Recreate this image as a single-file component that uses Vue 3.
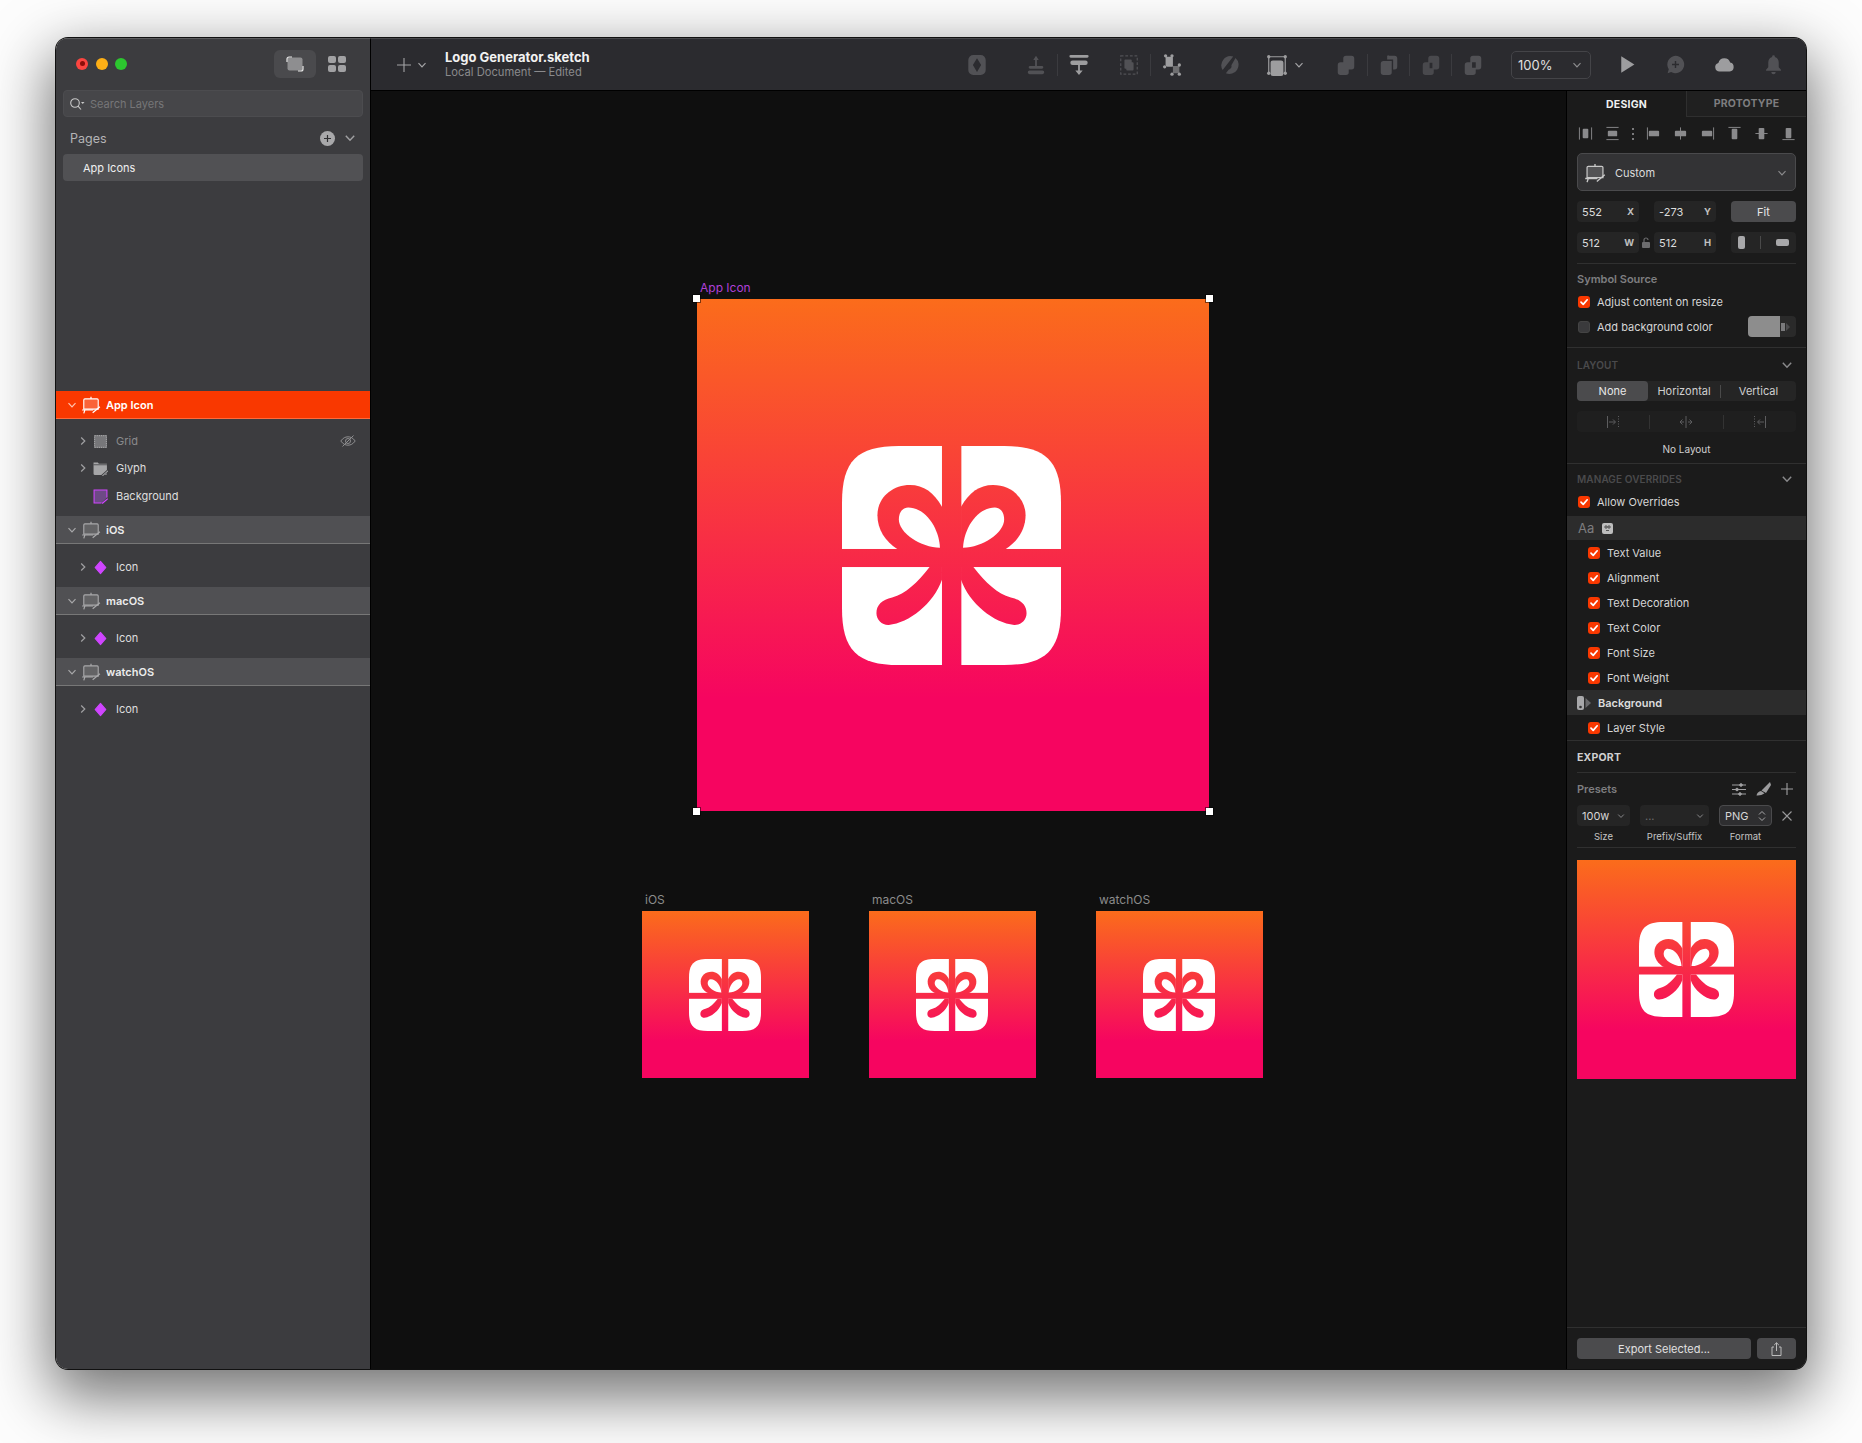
<template>
  <div class="page">
    <!-- shared icon sprites -->
    <svg class="sprites" width="0" height="0" aria-hidden="true">
      <defs>
        <mask id="gift-mask" maskUnits="userSpaceOnUse" x="0" y="0" width="655" height="655">
          <path fill="#fff" d="M170 0H485C610 0 655 45 655 170V485C655 610 610 655 485 655H170C45 655 0 610 0 485V170C0 45 45 0 170 0Z" />
          <g fill="#000">
            <rect x="299" y="0" width="58" height="655" />
            <rect x="0" y="308" width="655" height="54" />
            <path d="M299 182C275 140 245 117 203 117C150 117 106 155 106 207C106 250 130 285 165 308L299 330Z" />
            <path d="M356 182C380 140 410 117 452 117C505 117 549 155 549 207C549 250 525 285 490 308L356 330Z" />
            <path d="M262 362C225 410 190 442 150 453C120 460 103 475 103 500C103 520 120 536 140 535C200 530 275 470 299 400V362Z" />
            <path d="M393 362C430 410 465 442 505 453C535 460 552 475 552 500C552 520 535 536 515 535C455 530 380 470 356 400V362Z" />
          </g>
          <g fill="#fff">
            <path d="M293 304C290 245 250 184 198 184C180 184 170 200 170 220C170 260 235 304 293 304Z" />
            <path d="M362 304C365 245 405 184 457 184C475 184 485 200 485 220C485 260 420 304 362 304Z" />
          </g>
        </mask>
        <symbol id="gift" viewBox="0 0 655 655">
          <rect width="655" height="655" fill="#fff" mask="url(#gift-mask)" />
        </symbol>
        <symbol id="chev" viewBox="0 0 10 10">
          <path d="M1.500 3.200 5 6.800l3.500-3.600" fill="none" stroke="currentColor" stroke-width="1.200" />
        </symbol>
        <symbol id="chev-r" viewBox="0 0 10 10">
          <path d="M3.200 1.500 6.800 5 3.200 8.500" fill="none" stroke="currentColor" stroke-width="1.200" />
        </symbol>
        <symbol id="check" viewBox="0 0 12 12">
          <path d="M3 6.200 5.200 8.400 9.200 3.800" fill="none" stroke="#fff" stroke-width="1.700" stroke-linecap="round" stroke-linejoin="round" />
        </symbol>
        <symbol id="artboard" viewBox="0 0 18 16">
          <path d="M3.500 2.500h11a1 1 0 0 1 1 1v8.200h-13V3.500a1 1 0 0 1 1-1Z" fill="currentColor" fill-opacity=".22" stroke="currentColor" />
          <path d="M9 .6v2M1 12.500h10M3.500 12.500l-1 3M10.500 15 17 9.500" fill="none" stroke="currentColor" stroke-width="1.100" />
        </symbol>
        <symbol id="i-symbol" viewBox="0 0 24 24">
          <path fill-rule="evenodd" d="M8 1h8a5.500 5.500 0 0 1 5.500 5.500v11A5.500 5.500 0 0 1 16 23H8a5.500 5.500 0 0 1-5.500-5.500v-11A5.500 5.500 0 0 1 8 1Zm4 3.500-4.500 7.500 4.500 7.500 4.500-7.500Z" />
        </symbol>
        <symbol id="i-forward" viewBox="0 0 24 24">
          <path d="M12 2l3 4.500h-2V13h5.500a1.500 1.500 0 0 1 0 3h-13a1.500 1.500 0 0 1 0-3H11V6.500H9Zm-7 16h14a2 2 0 0 1 0 4H5a2 2 0 0 1 0-4Z" />
        </symbol>
        <symbol id="i-backward" viewBox="0 0 24 24">
          <path d="M3 1h18a1.500 1.500 0 0 1 0 3H3a1.500 1.500 0 0 1 0-3Zm2 6h14a2.500 2.500 0 0 1 0 5h-6v6h3l-4 5-4-5h3v-6H5a2.500 2.500 0 0 1 0-5Z" />
        </symbol>
        <symbol id="i-mask" viewBox="0 0 24 24">
          <path d="M3 2h18v20H3Z" fill="none" stroke="currentColor" stroke-width="1.300" stroke-dasharray="3 2" />
          <path d="M8 6h6a1 1 0 0 1 1 1v2h1a1 1 0 0 1 1 1v7a1 1 0 0 1-1 1h-6a1 1 0 0 1-1-1v-1H8a1 1 0 0 1-1-1V7a1 1 0 0 1 1-1Z" />
        </symbol>
        <symbol id="i-scissors" viewBox="0 0 24 24">
          <path d="M5 3h7a1 1 0 0 1 1 1v9a1 1 0 0 1-1 1H7a2 2 0 0 1-2-2Z" />
          <path d="M13 13h7v8h-7Z" fill-opacity=".6" />
          <circle cx="5" cy="2" r="1.800" /><circle cx="12" cy="2" r="1.800" /><circle cx="4" cy="14" r="1.800" /><circle cx="20" cy="12" r="1.800" /><circle cx="20" cy="22" r="1.800" /><circle cx="12" cy="22" r="1.800" />
        </symbol>
        <symbol id="i-rotate" viewBox="0 0 24 24">
          <path d="M15.500 2.800 4 17.500A10 10 0 0 1 15.500 2.800Zm2.500 1.500A10 10 0 0 1 7.500 21l3-3.800a4 4 0 0 0 3-5Z" />
        </symbol>
        <symbol id="i-resize" viewBox="0 0 24 24">
          <path d="M3 3h18M3 3v18M21 3v18" fill="none" stroke="currentColor" stroke-width="1.300" />
          <circle cx="3" cy="3" r="1.800" /><circle cx="21" cy="3" r="1.800" /><circle cx="3" cy="21" r="1.800" /><circle cx="21" cy="21" r="1.800" />
          <rect x="5" y="7" width="14" height="17" rx="2.500" />
        </symbol>
        <symbol id="i-union" viewBox="0 0 24 24">
          <path d="M12 2h6a3 3 0 0 1 3 3v9a3 3 0 0 1-3 3h-3v3a3 3 0 0 1-3 3H6a3 3 0 0 1-3-3v-8a3 3 0 0 1 3-3h3V5a3 3 0 0 1 3-3Z" />
        </symbol>
        <symbol id="i-subtract" viewBox="0 0 24 24">
          <path d="M8 7.500h7V20a3 3 0 0 1-3 3H6a3 3 0 0 1-3-3v-9.500a3 3 0 0 1 3-3Z" />
          <path d="M12 2h6a3 3 0 0 1 3 3v9a3 3 0 0 1-3 3h-1.500V6H10V3a1 1 0 0 1 2-1Z" />
        </symbol>
        <symbol id="i-intersect" viewBox="0 0 24 24">
          <path fill-rule="evenodd" d="M12 2h6a3 3 0 0 1 3 3v9a3 3 0 0 1-3 3h-3v3a3 3 0 0 1-3 3H6a3 3 0 0 1-3-3v-8a3 3 0 0 1 3-3h3V5a3 3 0 0 1 3-3Zm-1.500 7.500v6h3v-6Z" fill-opacity=".8" />
        </symbol>
        <symbol id="i-difference" viewBox="0 0 24 24">
          <path fill-rule="evenodd" d="M12 2h6a3 3 0 0 1 3 3v9a3 3 0 0 1-3 3h-3v3a3 3 0 0 1-3 3H6a3 3 0 0 1-3-3v-8a3 3 0 0 1 3-3h3V5a3 3 0 0 1 3-3Zm-1 7h4v6h-4Z" />
        </symbol>
        <symbol id="i-play" viewBox="0 0 24 24"><path d="M6 2.500 21 12 6 21.500Z" /></symbol>
        <symbol id="i-comment" viewBox="0 0 24 24">
          <path fill-rule="evenodd" d="M12 2a10 10 0 1 1-5 18.700L3 22l1.300-4.500A10 10 0 0 1 12 2Zm-.8 6v3.200H8v1.600h3.200V16h1.600v-3.200H16v-1.600h-3.200V8Z" />
        </symbol>
        <symbol id="i-cloud" viewBox="0 0 24 24"><path d="M6.500 20A5 5 0 0 1 5 10.200 7 7 0 0 1 18.500 9.800 5.200 5.200 0 0 1 18 20Z" /></symbol>
        <symbol id="i-bell" viewBox="0 0 24 24"><path d="M12 1.500a1.500 1.500 0 0 1 1.500 1.800C16.500 4 18 6.800 18 10v5l2.500 3v1h-17v-1L6 15v-5c0-3.200 1.500-6 4.500-6.700A1.500 1.500 0 0 1 12 1.500ZM9.500 20.500h5a2.500 2.500 0 0 1-5 0Z" /></symbol>
        <!-- alignment row -->
        <symbol id="a-1" viewBox="0 0 16 16"><path d="M1.500 1.500v13M14.500 1.500v13" fill="none" stroke="currentColor" /><rect x="5" y="3" width="6" height="10" rx="1" /></symbol>
        <symbol id="a-2" viewBox="0 0 16 16"><path d="M1.500 1.500h13M1.500 14.500h13" fill="none" stroke="currentColor" /><rect x="3" y="5" width="10" height="6" rx="1" /></symbol>
        <symbol id="a-3" viewBox="0 0 16 16"><path d="M1.500 1.500v13" fill="none" stroke="currentColor" /><rect x="3" y="5" width="11" height="6" rx="1" /></symbol>
        <symbol id="a-4" viewBox="0 0 16 16"><path d="M8 1.500v13" fill="none" stroke="currentColor" /><rect x="2" y="5" width="12" height="6" rx="1" /></symbol>
        <symbol id="a-5" viewBox="0 0 16 16"><path d="M14.500 1.500v13" fill="none" stroke="currentColor" /><rect x="2" y="5" width="11" height="6" rx="1" /></symbol>
        <symbol id="a-6" viewBox="0 0 16 16"><path d="M1.500 1.500h13" fill="none" stroke="currentColor" /><rect x="5" y="3" width="6" height="11" rx="1" /></symbol>
        <symbol id="a-7" viewBox="0 0 16 16"><path d="M1.500 8h13" fill="none" stroke="currentColor" /><rect x="5" y="2" width="6" height="12" rx="1" /></symbol>
        <symbol id="a-8" viewBox="0 0 16 16"><path d="M1.500 14.500h13" fill="none" stroke="currentColor" /><rect x="5" y="2" width="6" height="11" rx="1" /></symbol>
      </defs>
    </svg>

    <div class="window">
      <aside class="sidebar">
        <div class="side-top">
          <span class="light red"><i></i></span>
          <span class="light amber"></span>
          <span class="light green"></span>
          <div class="view-toggle">
            <span class="view active">
              <svg width="18" height="16" viewBox="0 0 18 16"><rect x="1.500" y="1.500" width="15" height="13" rx="2" fill="#8e8e90" /><path d="M1 6V3a2 2 0 0 1 2-2h3M17 10v3a2 2 0 0 1-2 2h-3" fill="none" stroke="#e8e8e8" stroke-width="1.200" /></svg>
            </span>
            <span class="view">
              <svg width="18" height="16" viewBox="0 0 18 16" fill="#a2a2a4"><rect width="8" height="7" rx="2" /><rect x="10" width="8" height="7" rx="2" /><rect y="9" width="8" height="7" rx="2" /><rect x="10" y="9" width="8" height="7" rx="2" /></svg>
            </span>
          </div>
        </div>

        <div class="search">
          <svg width="16" height="14" viewBox="0 0 16 14"><circle cx="6" cy="6" r="4.300" fill="none" stroke="#c8c8c8" stroke-width="1.100" /><path d="M9 9.200 12 12.500" stroke="#c8c8c8" stroke-width="1.100" /><path d="M12 5h3.500l-1.750 2Z" fill="#c8c8c8" /></svg>
          <span>Search Layers</span>
        </div>

        <div class="pages-head">
          <span>Pages</span>
          <span class="add-page">
            <svg width="9" height="9" viewBox="0 0 9 9"><path d="M4.500 1v7M1 4.500h7" stroke="#2f2f31" stroke-width="1.200" /></svg>
          </span>
          <svg class="icon-12 pages-chev" viewBox="0 0 10 10"><use href="#chev" /></svg>
        </div>
        <div class="page-row">App Icons</div>

        <div class="layers">
          <template v-for="group in layers" :key="group.name">
            <div class="group" :class="{ selected: group.selected }">
              <svg class="icon-10 g-chev" viewBox="0 0 10 10"><use href="#chev" /></svg>
              <svg class="g-icon" width="20" height="18" viewBox="0 0 18 16"><use href="#artboard" /></svg>
              <span>{{ group.name }}</span>
            </div>
            <div class="children" :class="group.pad">
              <div v-for="child in group.children" :key="child.name" class="layer" :class="{ dim: child.hidden }">
                <svg v-if="child.arrow" class="icon-10 l-chev" viewBox="0 0 10 10"><use href="#chev-r" /></svg>
                <span v-else class="l-chev"></span>
                <svg class="l-icon" width="15" height="15" viewBox="0 0 14 14">
                  <path v-if="child.kind === 'symbol'" d="M7 1.200 12 7l-5 5.800L2 7Z" fill="#cf45ff" stroke="#cf45ff" stroke-linejoin="round" />
                  <template v-else-if="child.kind === 'grid'">
                    <rect x="1" y="1" width="12" height="12" fill="#77777a" />
                    <rect x="1.500" y="1.500" width="11" height="11" fill="none" stroke="#a2a2a4" stroke-dasharray="1 1" />
                  </template>
                  <template v-else-if="child.kind === 'folder'">
                    <path d="M.5 1.500h4l1 1h7.500v9.500a1 1 0 0 1-1 1H1.500a1 1 0 0 1-1-1Z" fill="#a6a6a8" />
                    <path d="M.5 3.500h13" stroke="#3c3c3f" stroke-width=".7" />
                    <path d="M8.500 13.800 14 9" stroke="#3c3c3f" stroke-width="2.200" />
                    <path d="M8.800 13.800 14 9.200" stroke="#a6a6a8" />
                  </template>
                  <template v-else>
                    <path d="M1 1h12v7l-5 5H1Z" fill="#6d4a86" />
                    <path d="M8 13H1V1h12v7" fill="none" stroke="#cf45ff" />
                    <path d="M8.500 13.500 13.800 9" stroke="#cf45ff" stroke-width="1.200" />
                  </template>
                </svg>
                <span>{{ child.name }}</span>
                <svg v-if="child.hidden" class="eye" width="16" height="12" viewBox="0 0 16 12" fill="none" stroke="#8d8d8f"><path d="M.8 6C3 3 5.300 1.800 8 1.800S13 3 15.200 6C13 9 10.700 10.200 8 10.200S3 9 .8 6Z" /><circle cx="8" cy="6" r="2.500" /><path d="M2.500 11.500 13.500.5" /></svg>
              </div>
            </div>
          </template>
        </div>
      </aside>

      <div class="main">
        <header class="toolbar">
          <svg class="tb-plus" width="14" height="14" viewBox="0 0 14 14"><path d="M7 0v14M0 7h14" stroke="#a4a4a6" stroke-width="1.100" /></svg>
          <svg class="icon-10 tb-chev" viewBox="0 0 10 10"><use href="#chev" /></svg>
          <div class="doc">
            <div class="doc-title">Logo Generator.sketch</div>
            <div class="doc-sub">Local Document — Edited</div>
          </div>

          <div class="tools">
            <div v-for="(grp, i) in toolGroups" :key="i" class="tool-group" :class="grp.cls">
              <span v-for="tool in grp.items" :key="tool.icon" class="tool" :class="{ lit: tool.lit, sep: tool.sep }">
                <svg width="22" height="22" viewBox="0 0 24 24"><use :href="'#i-' + tool.icon" /></svg>
                <svg v-if="tool.chev" class="icon-10 tool-chev" viewBox="0 0 10 10"><use href="#chev" /></svg>
              </span>
            </div>
            <div class="zoom">
              <span>100%</span>
              <svg class="icon-10" viewBox="0 0 10 10"><use href="#chev" /></svg>
            </div>
            <div class="tool-group actions">
              <span v-for="tool in actions" :key="tool.icon" class="tool" :class="{ lit: tool.lit }">
                <svg width="21" height="21" viewBox="0 0 24 24"><use :href="'#i-' + tool.icon" /></svg>
              </span>
            </div>
          </div>
        </header>

        <div class="workspace">
          <main class="canvas">
            <div class="board-label main-label">App Icon</div>
            <div class="tile big">
              <svg width="219" height="219"><use href="#gift" /></svg>
              <i class="handle tl"></i><i class="handle tr"></i><i class="handle bl"></i><i class="handle br"></i>
            </div>

            <template v-for="board in boards" :key="board.name">
              <div class="board-label small-label" :class="board.name">{{ board.name }}</div>
              <div class="tile small" :class="board.name">
                <svg width="72" height="72"><use href="#gift" /></svg>
              </div>
            </template>
          </main>

          <aside class="inspector">
            <div class="tabs">
              <div class="tab on">DESIGN</div>
              <div class="tab">PROTOTYPE</div>
            </div>

            <div class="aligns">
              <svg v-for="a in 2" :key="a" width="15" height="15" viewBox="0 0 16 16"><use :href="'#a-' + a" /></svg>
              <span class="dots"><i></i><i></i><i></i></span>
              <svg v-for="a in [3, 4, 5, 6, 7, 8]" :key="a" width="15" height="15" viewBox="0 0 16 16"><use :href="'#a-' + a" /></svg>
            </div>

            <div class="preset-select">
              <svg width="22" height="20" viewBox="0 0 18 16"><use href="#artboard" /></svg>
              <span>Custom</span>
              <svg class="icon-10" viewBox="0 0 10 10"><use href="#chev" /></svg>
            </div>

            <div class="fields">
              <div class="field"><span>552</span><b>X</b></div>
              <div class="field"><span>-273</span><b>Y</b></div>
              <div class="fit">Fit</div>
            </div>
            <div class="fields second">
              <div class="field"><span>512</span><b>W</b></div>
              <svg class="lock" width="9" height="11" viewBox="0 0 9 11"><rect y="5" width="8" height="6" rx="1" fill="#6c6c6e" /><path d="M2 5V3a2 2 0 0 1 4 0" fill="none" stroke="#6c6c6e" stroke-width="1.200" /></svg>
              <div class="field"><span>512</span><b>H</b></div>
              <div class="orient">
                <i class="portrait"></i><em></em><i class="landscape"></i>
              </div>
            </div>

            <div class="rule inset first"></div>

            <div class="sym-head">Symbol Source</div>
            <label class="check-row">
              <span class="box on"><svg width="12" height="12"><use href="#check" /></svg></span>Adjust content on resize
            </label>
            <label class="check-row">
              <span class="box"></span>Add background color
              <span class="swatch"><i></i><svg width="12" height="12" viewBox="0 0 12 12"><path d="M1 2h4v8H1Z" fill="#7a7a7c" /><path d="M6 2l4 4-4 4Z" fill="#4c4c4e" /></svg></span>
            </label>

            <div class="rule after-sym"></div>

            <div class="sec-head layout-head">
              <span>LAYOUT</span>
              <svg class="icon-12" viewBox="0 0 10 10"><use href="#chev" /></svg>
            </div>
            <div class="seg">
              <span class="seg-on">None</span>
              <span>Horizontal</span>
              <span class="seg-v">Vertical</span>
            </div>
            <div class="seg-icons">
              <span><svg width="14" height="14" viewBox="0 0 14 14" fill="none" stroke="#5d5d5f"><path d="M1.500 1v12M3 7h6M7 4.500 9.500 7 7 9.500" /><path d="M12.500 1v12" stroke-dasharray="1 1.500" /></svg></span>
              <span><svg width="14" height="14" viewBox="0 0 14 14" fill="none" stroke="#5d5d5f"><path d="M7 1v12M1 7h4M3.500 4.500 1 7l2.500 2.500M9 7h4M10.500 4.500 13 7l-2.500 2.500" /></svg></span>
              <span><svg width="14" height="14" viewBox="0 0 14 14" fill="none" stroke="#5d5d5f"><path d="M12.500 1v12M11 7H5M7 4.500 4.500 7 7 9.500" /><path d="M1.500 1v12" stroke-dasharray="1 1.500" /></svg></span>
            </div>
            <div class="no-layout">No Layout</div>

            <div class="rule"></div>

            <div class="sec-head overrides-head">
              <span>MANAGE OVERRIDES</span>
              <svg class="icon-12" viewBox="0 0 10 10"><use href="#chev" /></svg>
            </div>
            <label class="check-row allow">
              <span class="box on"><svg width="12" height="12"><use href="#check" /></svg></span>Allow Overrides
            </label>
            <div class="band aa-band">
              <span class="aa">Aa</span>
              <svg width="11" height="11" viewBox="0 0 11 11"><rect width="11" height="11" rx="2" fill="#bdbdbd" /><path d="M3 3h2v2H3ZM6 3h2v2H6ZM4 7.500h3" fill="none" stroke="#3a3a3a" stroke-width=".8" /></svg>
            </div>
            <label v-for="name in textOverrides" :key="name" class="check-row sub">
              <span class="box on"><svg width="12" height="12"><use href="#check" /></svg></span>{{ name }}
            </label>
            <div class="band bold-band">
              <svg width="16" height="16" viewBox="0 0 16 16"><rect x="1" y="1" width="7" height="14" rx="2" fill="#a8a8aa" /><circle cx="4.500" cy="12" r="1.300" fill="#333" /><path d="M9.500 3 15 8l-5.500 5Z" fill="#6a6a6c" /></svg>
              <span>Background</span>
            </div>
            <label class="check-row sub">
              <span class="box on"><svg width="12" height="12"><use href="#check" /></svg></span>Layer Style
            </label>

            <div class="rule"></div>

            <div class="export-head">EXPORT</div>
            <div class="rule inset"></div>
            <div class="presets">
              <span>Presets</span>
              <svg width="14" height="13" viewBox="0 0 14 13" fill="none" stroke="#a0a0a2"><path d="M0 2h14M0 6.500h14M0 11h14" /><circle cx="9" cy="2" r="1.300" fill="#a0a0a2" /><circle cx="5" cy="6.500" r="1.300" fill="#a0a0a2" /><circle cx="8" cy="11" r="1.300" fill="#a0a0a2" /></svg>
              <svg width="15" height="14" viewBox="0 0 15 14"><path d="M14 0 15 3 10 11 5.500 8.500Z" fill="#9c9c9e" /><path d="M.5 13.500C1 11 2.500 9.500 5 9l3.500 2.300C6 13 3.500 13.800.5 13.500Z" fill="#9c9c9e" /></svg>
              <svg width="12" height="12" viewBox="0 0 12 12"><path d="M6 0v12M0 6h12" stroke="#a0a0a2" stroke-width="1.100" /></svg>
            </div>
            <div class="export-row">
              <div class="exp size"><span>100w</span><svg class="icon-8" viewBox="0 0 10 10"><use href="#chev" /></svg></div>
              <div class="exp prefix"><span>...</span><svg class="icon-8" viewBox="0 0 10 10"><use href="#chev" /></svg></div>
              <div class="exp format"><span>PNG</span><svg width="8" height="12" viewBox="0 0 8 12" fill="none" stroke="#a8a8aa"><path d="M1 4.500 4 1.500l3 3M1 7.500l3 3 3-3" /></svg></div>
              <svg class="remove" width="10" height="10" viewBox="0 0 10 10"><path d="M.5.500l9 9M9.500.500l-9 9" stroke="#9a9a9c" stroke-width="1.100" /></svg>
            </div>
            <div class="export-labels">
              <span class="size">Size</span><span class="prefix">Prefix/Suffix</span><span class="format">Format</span>
            </div>
            <div class="rule inset"></div>

            <div class="tile preview">
              <svg width="95" height="95"><use href="#gift" /></svg>
            </div>

            <footer class="ins-foot">
              <div class="export-btn">Export Selected...</div>
              <div class="share">
                <svg width="11" height="14" viewBox="0 0 11 14" fill="none" stroke="#bdbdbd"><path d="M3 5H1v8.500h9V5H8M5.500 9V.8M3.200 3 5.500.8 7.800 3" /></svg>
              </div>
            </footer>
          </aside>
        </div>
      </div>
    </div>
  </div>
</template>

<script setup>
const layers = [
  {
    name: 'App Icon',
    selected: true,
    pad: 'first-kids',
    children: [
      { name: 'Grid', kind: 'grid', arrow: true, hidden: true },
      { name: 'Glyph', kind: 'folder', arrow: true },
      { name: 'Background', kind: 'shape' },
    ],
  },
  { name: 'iOS', pad: 'kids', children: [{ name: 'Icon', kind: 'symbol', arrow: true }] },
  { name: 'macOS', pad: 'kids', children: [{ name: 'Icon', kind: 'symbol', arrow: true }] },
  { name: 'watchOS', pad: 'kids', children: [{ name: 'Icon', kind: 'symbol', arrow: true }] },
]

const toolGroups = [
  { cls: 'g-a', items: [{ icon: 'symbol' }] },
  { cls: 'g-b', items: [{ icon: 'forward' }, { icon: 'backward', lit: true, sep: true }] },
  { cls: 'g-c', items: [{ icon: 'mask' }, { icon: 'scissors', lit: true, sep: true }] },
  { cls: 'g-d', items: [{ icon: 'rotate' }] },
  { cls: 'g-e', items: [{ icon: 'resize', lit: true, chev: true }] },
  {
    cls: 'g-f',
    items: [
      { icon: 'union' },
      { icon: 'subtract', sep: true },
      { icon: 'intersect', sep: true },
      { icon: 'difference', sep: true },
    ],
  },
]

const actions = [
  { icon: 'play', lit: true },
  { icon: 'comment' },
  { icon: 'cloud', lit: true },
  { icon: 'bell' },
]

const boards = [{ name: 'iOS' }, { name: 'macOS' }, { name: 'watchOS' }]

const textOverrides = ['Text Value', 'Alignment', 'Text Decoration', 'Text Color', 'Font Size', 'Font Weight']
</script>

<style>
html,
body {
  background: #fdfdfd;
}
</style>

<style scoped>
.page {
  box-sizing: border-box;
  width: 1862px;
  height: 1443px;
  padding: 38px 56px 74px;
  overflow: hidden;
  font-family: Inter, 'Liberation Sans', sans-serif;
  font-size: 11px;
  color: #dcdcdc;
}
.sprites {
  position: absolute;
}
svg {
  display: block;
  flex: none;
}
.icon-8 { width: 8px; height: 8px; }
.icon-10 { width: 10px; height: 10px; }
.icon-12 { width: 12px; height: 12px; }

.window {
  display: flex;
  height: 1331px;
  border-radius: 12px;
  overflow: hidden;
  box-shadow: 0 0 0 1px #111, 0 22px 60px 6px rgba(0, 0, 0, 0.55);
}

/* left column */
.sidebar {
  box-sizing: border-box;
  width: 315px;
  flex: none;
  background: #3c3c3f;
  border-right: 1px solid #000;
  border-top: 1px solid #5c5c5e;
}
.side-top {
  display: flex;
  align-items: center;
  height: 51px;
  padding: 0 0 2px 20px;
  box-sizing: border-box;
  gap: 7.500px;
}
.light {
  display: flex;
  align-items: center;
  justify-content: center;
  width: 12px;
  height: 12px;
  border-radius: 50%;
}
.light.red { background: #fb4540; }
.light.red i { width: 5px; height: 5px; border-radius: 50%; background: #8c0e0a; }
.light.amber { background: #fdaf16; }
.light.green { background: #2cc62f; }
.view-toggle {
  display: flex;
  margin-left: 139px;
}
.view {
  display: flex;
  align-items: center;
  justify-content: center;
  width: 42px;
  height: 28px;
  border-radius: 6px;
}
.view.active { background: #4a4a4d; }
.search {
  display: flex;
  align-items: center;
  gap: 5px;
  height: 27px;
  margin: 0 7px;
  padding-left: 5px;
  background: #464649;
  border: 1px solid #4c4c4f;
  box-sizing: border-box;
  border-radius: 4px;
  color: #767678;
}
.pages-head {
  display: flex;
  align-items: center;
  height: 37px;
  padding: 5px 14px 0 14px;
  box-sizing: border-box;
  font-size: 12.500px;
  color: #b4b4b6;
}
.add-page {
  display: flex;
  align-items: center;
  justify-content: center;
  width: 15px;
  height: 15px;
  margin-left: auto;
  border-radius: 50%;
  background: #a8a8aa;
}
.pages-chev {
  margin-left: 9px;
  color: #a0a0a2;
}
.page-row {
  display: flex;
  align-items: center;
  height: 27px;
  margin: 0 7px;
  padding-left: 20px;
  border-radius: 4px;
  background: #515154;
  color: #efefef;
}
.layers {
  margin-top: 210px;
}
.group {
  box-sizing: border-box;
  display: flex;
  align-items: center;
  height: 28px;
  padding-left: 11px;
  background: #505053;
  border-bottom: 1px solid #777;
  font-weight: 600;
  color: #ececec;
}
.group.selected {
  background: #f93800;
  border-bottom-color: #ff6a3a;
  color: #fff;
}
.g-chev { color: #a8a8aa; }
.selected .g-chev { color: #ffc4b0; }
.g-icon {
  margin: 0 5px 0 4px;
  color: #a8a8aa;
}
.selected .g-icon { color: #fff; }
.first-kids {
  padding: 9px 0 6px;
}
.kids {
  padding: 10px 0 7px;
}
.layer {
  display: flex;
  align-items: center;
  height: 26px;
  padding-left: 22px;
  color: #dedede;
}
.layer + .layer { height: 28px; }
.layer.dim { color: #8a8a8c; }
.l-chev {
  width: 10px;
  color: #a0a0a2;
}
.l-icon {
  margin: 0 8px 0 5px;
}
.eye {
  margin-left: auto;
  margin-right: 14px;
}

/* toolbar */
.main {
  flex: 1;
  min-width: 0;
  display: flex;
  flex-direction: column;
  background: #0f0f0f;
}
.toolbar {
  box-sizing: border-box;
  display: flex;
  align-items: center;
  height: 53px;
  padding-left: 26px;
  background: #2b2b2f;
  border-bottom: 1px solid #000;
  border-top: 1px solid #48484b;
}
.tb-chev {
  margin-left: 6px;
  color: #a4a4a6;
}
.doc {
  margin-left: 18px;
}
.doc-title {
  font-size: 13px;
  font-weight: 700;
  line-height: 15px;
  color: #f2f2f2;
}
.doc-sub {
  font-size: 11.200px;
  line-height: 14px;
  color: #8a8a8c;
}
.tools {
  display: flex;
  align-items: center;
  margin-left: auto;
  padding-right: 8px;
}
.tool-group {
  display: flex;
  align-items: center;
}
.tool {
  position: relative;
  display: flex;
  align-items: center;
  justify-content: center;
  width: 42px;
  height: 22px;
  color: #515155;
  fill: currentColor;
}
.tool.lit { color: #9d9d9f; }
.tool.sep { border-left: 1px solid #3b3b3f; box-sizing: border-box; }
.g-b { margin-left: 17px; }
.g-c { margin-left: 9px; }
.g-d { margin-left: 17px; }
.g-e { margin-left: 5px; }
.g-e .tool { width: 60px; justify-content: flex-start; padding-left: 10px; box-sizing: border-box; }
.tool-chev { margin-left: 6px; color: #a4a4a6; }
.g-f { margin-left: 9px; }
.zoom {
  box-sizing: border-box;
  display: flex;
  align-items: center;
  justify-content: space-between;
  width: 80px;
  height: 28px;
  margin-left: 18px;
  padding: 0 8px 0 6px;
  border: 1px solid #444448;
  border-radius: 5px;
  font-size: 13px;
  color: #e0e0e0;
}
.zoom svg { color: #8c8c8e; }
.actions { margin-left: 11px; }
.actions .tool { width: 49px; }

/* canvas */
.workspace {
  flex: 1;
  min-height: 0;
  display: flex;
}
.canvas {
  position: relative;
  flex: 1;
  background: #0f0f0f;
}
.tile {
  display: flex;
  align-items: center;
  justify-content: center;
  background: linear-gradient(180deg, #fb6c1b 0%, #f60560 78%, #f60560 100%);
  color: #fff;
}
.big {
  position: absolute;
  left: 326px;
  top: 208px;
  box-sizing: border-box;
  width: 512px;
  height: 512px;
  padding-right: 4px;
}
.small {
  position: absolute;
  top: 820px;
  box-sizing: border-box;
  width: 167px;
  height: 167px;
  padding-right: 1px;
}
.small.iOS { left: 271px; }
.small.macOS { left: 498px; }
.small.watchOS { left: 725px; }
.board-label {
  position: absolute;
  font-size: 12px;
  line-height: 14px;
}
.main-label {
  left: 329px;
  top: 190px;
  color: #b040d8;
}
.small-label {
  top: 802px;
  color: #8c8c8c;
}
.small-label.iOS { left: 274px; }
.small-label.macOS { left: 501px; }
.small-label.watchOS { left: 728px; }
.handle {
  position: absolute;
  width: 7px;
  height: 7px;
  background: #fff;
  box-shadow: 0 0 0 1px rgba(0, 0, 0, 0.5);
}
.tl { left: -4px; top: -4px; }
.tr { right: -4px; top: -4px; }
.bl { left: -4px; bottom: -4px; }
.br { right: -4px; bottom: -4px; }

/* inspector */
.inspector {
  box-sizing: border-box;
  width: 240px;
  flex: none;
  display: flex;
  flex-direction: column;
  background: #1b1b1b;
  border-left: 1px solid #000;
}
.tabs {
  display: flex;
  height: 26px;
  flex: none;
  font-size: 10.500px;
  font-weight: 700;
  letter-spacing: 0.2px;
}
.tab {
  display: flex;
  align-items: center;
  justify-content: center;
  flex: 1;
  color: #7d7d7f;
  border-left: 1px solid #2f2f2f;
  border-bottom: 1px solid #2f2f2f;
  background: #202020;
}
.tab.on {
  flex: none;
  width: 119px;
  color: #f0f0f0;
  background: none;
  border: 0;
}
.aligns {
  display: flex;
  align-items: center;
  justify-content: space-between;
  height: 36px;
  flex: none;
  padding: 0 10px 3px 11px;
  box-sizing: border-box;
  color: #8a8a8c;
  fill: #8a8a8c;
}
.dots {
  display: flex;
  flex-direction: column;
  gap: 3px;
}
.dots i {
  width: 2px;
  height: 2px;
  background: #7a7a7c;
}
.preset-select {
  box-sizing: border-box;
  display: flex;
  align-items: center;
  flex: none;
  height: 38px;
  margin: 0 10px;
  padding: 1px 8px 0 6px;
  background: #333335;
  border: 1px solid #4a4a4c;
  border-radius: 5px;
  color: #c8c8c8;
}
.preset-select > span {
  margin-left: 9px;
  margin-right: auto;
  font-size: 11px;
  color: #dcdcdc;
}
.preset-select .icon-10 { color: #8a8a8c; }
.fields {
  display: flex;
  align-items: center;
  flex: none;
  height: 21px;
  margin: 10px 10px 0;
  gap: 15px;
}
.field {
  box-sizing: border-box;
  display: flex;
  align-items: center;
  justify-content: space-between;
  width: 62px;
  height: 21px;
  padding: 0 5px;
  background: #252525;
  border-radius: 4px;
  color: #dcdcdc;
}
.field b {
  font-size: 9.500px;
  font-weight: 700;
  color: #c0c0c0;
}
.fit {
  display: flex;
  align-items: center;
  justify-content: center;
  flex: 1;
  height: 21px;
  background: #4b4b4d;
  border-radius: 4px;
  color: #e8e8e8;
}
.second { position: relative; }
.lock {
  position: absolute;
  left: 65px;
  top: 5px;
}
.orient {
  display: flex;
  align-items: center;
  justify-content: space-around;
  flex: 1;
  height: 21px;
  background: #252525;
  border-radius: 4px;
}
.orient i { background: #a8a8aa; border-radius: 2px; }
.orient em { width: 1px; height: 13px; background: #4a4a4a; }
.portrait { width: 7px; height: 13px; }
.landscape { width: 13px; height: 7px; }
.rule {
  flex: none;
  height: 1px;
  background: #303030;
}
.rule.inset { margin: 0 10px; }
.rule.first { margin-top: 10px; }
.sym-head {
  flex: none;
  height: 25px;
  padding: 8px 10px 0;
  box-sizing: border-box;
  font-weight: 600;
  color: #7e7e80;
}
.check-row {
  display: flex;
  align-items: center;
  flex: none;
  height: 25px;
  padding-left: 11px;
  color: #d6d6d6;
}
.box {
  box-sizing: border-box;
  width: 12px;
  height: 12px;
  margin-right: 7px;
  background: #3a3a3c;
  border: 1px solid #444;
  border-radius: 3px;
}
.box.on {
  background: #f93800;
  border: 0;
}
.swatch {
  display: flex;
  align-items: center;
  width: 48px;
  height: 21px;
  margin-left: auto;
  margin-right: 10px;
  background: #2a2a2a;
  border-radius: 4px;
  overflow: hidden;
}
.swatch i {
  width: 32px;
  height: 21px;
  background: #8d8d8d;
}
.after-sym { margin-top: 8px; }
.sec-head {
  display: flex;
  align-items: center;
  justify-content: space-between;
  flex: none;
  padding: 0 13px 2px 10px;
  box-sizing: border-box;
  color: #4a4a4c;
  font-size: 10px;
  font-weight: 600;
  letter-spacing: 0.1px;
}
.sec-head svg { color: #8a8a8c; }
.layout-head { height: 33px; padding-top: 1px; padding-bottom: 0; }
.seg {
  display: flex;
  align-items: center;
  flex: none;
  height: 20px;
  margin: 0 10px;
  background: #252525;
  border-radius: 4px;
  color: #d0d0d0;
}
.seg span {
  display: flex;
  align-items: center;
  justify-content: center;
  height: 20px;
  width: 72px;
}
.seg .seg-on {
  width: 71px;
  background: #4b4b4d;
  border-radius: 4px;
  color: #e8e8e8;
}
.seg .seg-v {
  flex: 1;
  height: 13px;
  border-left: 1px solid #4a4a4a;
}
.seg-icons {
  display: flex;
  flex: none;
  height: 21px;
  margin: 10px 10px 0;
  background: #1f1f1f;
  border-radius: 4px;
  align-items: center;
}
.seg-icons span {
  display: flex;
  justify-content: center;
  flex: 1;
}
.seg-icons span + span { border-left: 1px solid #333; }
.no-layout {
  flex: none;
  height: 31px;
  padding-top: 3px;
  box-sizing: border-box;
  display: flex;
  align-items: center;
  justify-content: center;
  font-size: 10px;
  color: #d0d0d0;
}
.overrides-head { height: 28px; padding-top: 2px; padding-bottom: 0; }
.allow { height: 24px; padding-bottom: 4px; box-sizing: border-box; }
.band {
  display: flex;
  align-items: center;
  flex: none;
  height: 25px;
  padding-left: 11px;
  gap: 8px;
  background: #2c2c2c;
}
.aa-band { height: 24px; }
.aa {
  font-size: 13px;
  color: #7d7d7f;
}
.bold-band {
  gap: 6px;
  padding-left: 9px;
  font-weight: 600;
  color: #dcdcdc;
}
.sub { padding-left: 21px; }
.export-head {
  display: flex;
  align-items: center;
  flex: none;
  height: 31px;
  padding-left: 10px;
  padding-top: 2px;
  box-sizing: border-box;
  font-size: 10.500px;
  font-weight: 700;
  letter-spacing: 0.2px;
  color: #d0d0d0;
}
.presets {
  display: flex;
  align-items: center;
  flex: none;
  height: 32px;
  padding: 0 13px 0 10px;
  box-sizing: border-box;
  font-weight: 600;
  color: #7e7e80;
}
.presets span { margin-right: auto; }
.presets svg + svg { margin-left: 10px; }
.export-row {
  display: flex;
  align-items: center;
  flex: none;
  height: 21px;
  margin: 0 10px;
  gap: 10px;
}
.exp {
  box-sizing: border-box;
  display: flex;
  align-items: center;
  justify-content: space-between;
  height: 21px;
  padding: 0 5px;
  background: #252525;
  border-radius: 4px;
  color: #d6d6d6;
}
.exp svg { color: #8a8a8c; }
.exp.size { width: 53px; }
.exp.prefix { width: 69px; color: #6c6c6e; }
.exp.format { width: 53px; background: #2e2e30; border: 1px solid #4a4a4c; }
.export-labels {
  display: flex;
  flex: none;
  height: 21px;
  margin: 0 10px;
  gap: 10px;
  align-items: center;
  font-size: 9.500px;
  color: #c4c4c4;
}
.export-labels span { text-align: center; }
.export-labels .size { width: 53px; }
.export-labels .prefix { width: 69px; }
.export-labels .format { width: 53px; }
.preview {
  flex: none;
  height: 219px;
  margin: 12px 10px 0;
}
.ins-foot {
  box-sizing: border-box;
  display: flex;
  flex: none;
  gap: 6px;
  height: 42px;
  margin-top: auto;
  padding: 10px;
  border-top: 1px solid #303030;
}
.export-btn {
  display: flex;
  align-items: center;
  justify-content: center;
  flex: 1;
  height: 21px;
  background: #4b4b4d;
  border-radius: 4px;
  color: #e0e0e0;
}
.share {
  display: flex;
  align-items: center;
  justify-content: center;
  width: 39px;
  height: 21px;
  background: #4b4b4d;
  border-radius: 4px;
}
</style>
